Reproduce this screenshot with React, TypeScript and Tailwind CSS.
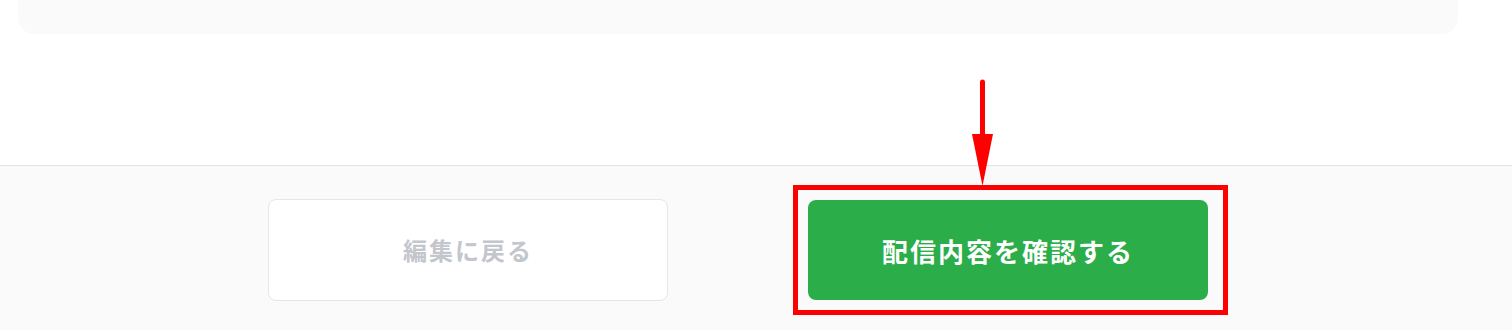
const jp = { fontFamily: '"Noto Sans CJK JP", "Noto Sans", sans-serif' };

const Arrow = () => (
    <svg className="absolute left-[970px] top-[77px]" width="25" height="110" viewBox="0 0 25 110">
        <line x1="12.5" y1="5" x2="12.5" y2="60" stroke="#ff0000" strokeWidth="5" strokeLinecap="round" />
        <polygon points="2,57 23,57 12.5,109" fill="#ff0000" />
    </svg>
);

const App = () => {
    return (
        <div className="relative w-full h-[330px] bg-white overflow-hidden" style={jp}>
            <div className="mx-[18px] w-[1440px] h-[34px] rounded-b-2xl bg-[#fafafa]" />

            <div className="h-[131px]" />

            <footer className="h-[166px] bg-[#fafafa] border-t border-[#e3e3e3]">
                <div className="flex items-center gap-[140px] pl-[268px] pt-[33px]">
                    <button className="w-[400px] h-[102px] rounded-lg border border-[#e6e6e6] bg-white text-[24px] font-bold tracking-[2px] text-[#c3c6cc]">
                        編集に戻る
                    </button>
                    <div className="relative">
                        <button className="w-[400px] h-[100px] rounded-lg bg-[#2bad4a] text-[26px] font-bold tracking-[2px] text-white">
                            配信内容を確認する
                        </button>
                        <div className="absolute -left-[15px] -top-[15px] w-[435px] h-[130px] border-[5px] border-[#ff0000]" />
                    </div>
                </div>
            </footer>

            <Arrow />
        </div>
    );
};

export default App;
